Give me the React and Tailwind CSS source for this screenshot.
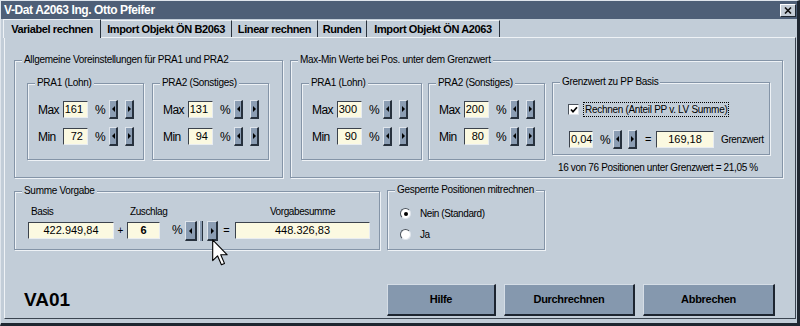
import React from 'react';

const BG = 'bg-[#c2cdd8]';

function Spin({ dir = 'right', className = '' }) {
    return (
        <div className={`w-[9px] h-[19px] bg-[#8b9db3] border-t border-l border-t-[#dfe5ec] border-l-[#dfe5ec] border-r-2 border-b-2 border-r-[#27313d] border-b-[#27313d] flex items-center justify-center ${className}`}>
            {dir === 'left'
                ? <div className="w-0 h-0 border-y-[3px] border-y-transparent border-r-[3px] border-r-black" />
                : <div className="w-0 h-0 border-y-[3px] border-y-transparent border-l-[3px] border-l-black" />}
        </div>
    );
}

function Field({ children, className = '' }) {
    return (
        <div className={`h-[17px] bg-[#fbf9e1] border border-t-[#3b424c] border-l-[#3b424c] border-r-[#e9edf1] border-b-[#e9edf1] text-[11px] tracking-normal leading-[15px] text-black whitespace-nowrap ${className}`}>
            {children}
        </div>
    );
}

function Group({ label, className = '', children }) {
    return (
        <div className={`relative border border-[#8494a7] shadow-[inset_1px_1px_0_#eef2f6,1px_1px_0_#eef2f6] ${className}`}>
            <span className={`absolute -top-[8px] left-[7px] px-[2px] ${BG} text-[10px] tracking-[-0.3px] leading-[14px] whitespace-nowrap`}>{label}</span>
            {children}
        </div>
    );
}

function PctRow({ label, value }) {
    return (
        <div className="flex items-center h-[19px]">
            <span className="w-[25px] text-[12px] tracking-[-0.6px]">{label}</span>
            <Field className="w-[25px] text-right pr-[4px]">{value}</Field>
            <span className="w-[21px] pl-[7px] text-[12px]">%</span>
            <Spin dir="left" />
            <Spin className="ml-[7px]" />
        </div>
    );
}

function PraBox({ label, max, min, className = '' }) {
    return (
        <Group label={label} className={`h-[77px] ${className}`}>
            <div className="pt-[16px] pl-[10px] flex flex-col gap-[8px]">
                <PctRow label="Max" value={max} />
                <PctRow label="Min" value={min} />
            </div>
        </Group>
    );
}

function Radio({ checked }) {
    return (
        <div className="w-[11px] h-[11px] rounded-full bg-white border border-t-[#4a525c] border-l-[#4a525c] border-r-[#dfe5ec] border-b-[#dfe5ec] flex items-center justify-center">
            {checked && <div className="w-[4px] h-[4px] rounded-full bg-black" />}
        </div>
    );
}

function WinButton({ children, className = '' }) {
    return (
        <button className={`h-[32px] bg-[#8598ae] border-t border-l border-t-[#d5dde6] border-l-[#d5dde6] border-r-2 border-b-2 border-r-[#1d2530] border-b-[#1d2530] text-[11px] tracking-[-0.3px] font-bold text-black ${className}`}>
            {children}
        </button>
    );
}

const tabs = [
    { label: 'Import Objekt ÖN B2063', w: 'w-[131px]' },
    { label: 'Linear rechnen', w: 'w-[86px]' },
    { label: 'Runden', w: 'w-[49px]' },
    { label: 'Import Objekt ÖN A2063', w: 'w-[133px]' },
];

export default function App() {
    return (
        <div className={`relative w-[800px] h-[326px] ${BG} border-l border-t border-l-[#dfe5ec] border-t-[#dfe5ec] border-r-[3px] border-b-[3px] border-r-[#1f2731] border-b-[#1f2731] flex flex-col overflow-hidden text-black whitespace-nowrap font-['Liberation_Sans',Arial,sans-serif]`}>
            {/* title bar */}
            <div className="h-[18px] bg-[#4e5f77] flex items-center justify-between pl-[3px] pr-[1px]">
                <span className="text-white font-bold text-[12px] tracking-[-0.4px] leading-[16px]">V-Dat A2063 Ing. Otto Pfeifer</span>
                <div className="w-[16px] h-[13px] bg-[#c5cdd6] border-t border-l border-t-white border-l-white border-r border-b border-r-[#1f2731] border-b-[#1f2731] flex items-center justify-center">
                    <svg width="8" height="7" viewBox="0 0 8 7">
                        <path d="M1 0.5 L7 6.5 M7 0.5 L1 6.5" stroke="#111" strokeWidth="1.6" />
                    </svg>
                </div>
            </div>

            {/* tabs */}
            <div className="h-[18px] flex items-end pl-[2px]">
                <div className={`w-[98px] h-[19px] ${BG} border-t border-l border-t-[#eef2f6] border-l-[#eef2f6] border-r border-r-[#2a333e] flex items-center justify-center text-[11px] tracking-[-0.4px] font-bold z-10 -mb-[1px]`}>
                    Variabel rechnen
                </div>
                {tabs.map(t => (
                    <div key={t.label} className={`${t.w} h-[17px] border-t border-t-[#eef2f6] border-r border-r-[#2a333e] flex items-center justify-center text-[11px] tracking-[-0.4px] font-bold`}>
                        {t.label}
                    </div>
                ))}
            </div>

            {/* tab panel */}
            <div className="flex-1 ml-[3px] mr-[1px] mb-[4px] border-t border-l border-t-[#eef2f6] border-l-[#eef2f6] border-r border-b border-r-[#3a4450] border-b-[#3a4450] pl-[9px] pt-[22px] flex flex-col">
                <div className="flex gap-[7px]">
                    <Group label="Allgemeine Voreinstellungen für PRA1 und PRA2" className="w-[269px] h-[118px]">
                        <div className="pt-[22px] pl-[12px] flex gap-[8px]">
                            <PraBox label="PRA1 (Lohn)" max="161" min="72" className="w-[117px]" />
                            <PraBox label="PRA2 (Sonstiges)" max="131" min="94" className="w-[117px]" />
                        </div>
                    </Group>

                    <Group label="Max-Min Werte bei Pos. unter dem Grenzwert" className="w-[493px] h-[118px]">
                        <div className="pt-[21px] pl-[10px] flex items-start">
                            <PraBox label="PRA1 (Lohn)" max="300" min="90" className="w-[121px] mt-[1px]" />
                            <PraBox label="PRA2 (Sonstiges)" max="200" min="80" className="w-[117px] mt-[1px] ml-[6px]" />
                            <div className="ml-[7px] flex flex-col">
                                <Group label="Grenzwert zu PP Basis" className="w-[218px] h-[73px]">
                                    <div className="pt-[19px] pl-[15px] flex items-center">
                                        <div className="w-[11px] h-[11px] bg-white border border-t-[#4a525c] border-l-[#4a525c] border-r-[#dfe5ec] border-b-[#dfe5ec] flex items-center justify-center">
                                            <svg width="8" height="8" viewBox="0 0 8 8">
                                                <path d="M1 3.5 L3 5.8 L7 1.2" fill="none" stroke="#000" strokeWidth="1.7" />
                                            </svg>
                                        </div>
                                        <span className="ml-[4px] border border-dotted border-black px-[1px] text-[10px] tracking-[-0.3px] leading-[13px]">
                                            Rechnen (Anteil PP v. LV Summe)
                                        </span>
                                    </div>
                                    <div className="mt-[13px] pl-[16px] flex items-center">
                                        <Field className="w-[24px] pl-[1px]">0,04</Field>
                                        <span className="w-[20px] pl-[7px] text-[12px]">%</span>
                                        <Spin dir="left" />
                                        <Spin className="ml-[6px]" />
                                        <span className="w-[19px] pl-[8px] text-[11px]">=</span>
                                        <Field className="w-[58px] text-center">169,18</Field>
                                        <span className="ml-[7px] text-[10px] tracking-[-0.4px]">Grenzwert</span>
                                    </div>
                                </Group>
                                <span className="mt-[7px] pl-[6px] text-[10px] tracking-[-0.35px] leading-[12px]">
                                    16 von 76 Positionen unter Grenzwert = 21,05 %
                                </span>
                            </div>
                        </div>
                    </Group>
                </div>

                <div className="flex gap-[7px] mt-[13px]">
                    <Group label="Summe Vorgabe" className="w-[366px] h-[59px]">
                        <div className="pt-[14px] pl-[13px] flex items-end">
                            <div className="w-[86px] flex flex-col gap-[4px]">
                                <span className="pl-[3px] text-[10px] tracking-[-0.4px] leading-[12px]">Basis</span>
                                <Field className="w-[86px] text-center">422.949,84</Field>
                            </div>
                            <span className="w-[13px] text-center text-[10px] leading-[17px]">+</span>
                            <div className="w-[33px] flex flex-col gap-[4px]">
                                <span className="pl-[3px] text-[10px] tracking-[-0.4px] leading-[12px]">Zuschlag</span>
                                <Field className="w-[33px] text-center font-bold">6</Field>
                            </div>
                            <span className="w-[25px] pl-[12px] text-[12px] leading-[17px]">%</span>
                            <div className="flex items-end -mb-[2px]">
                                <Spin dir="left" className="w-[12px] h-[20px]" />
                                <div className="ml-[2px] w-[4px] h-[20px] bg-[#8b9db3] border-l border-l-[#dfe5ec] border-r border-r-[#27313d]" />
                                <Spin className="ml-[4px] w-[11px] h-[20px]" />
                            </div>
                            <span className="w-[17px] text-center text-[11px] leading-[17px]">=</span>
                            <div className="w-[135px] flex flex-col gap-[4px]">
                                <span className="text-center text-[10px] tracking-[-0.4px] leading-[12px]">Vorgabesumme</span>
                                <Field className="w-[135px] text-center">448.326,83</Field>
                            </div>
                        </div>
                    </Group>

                    <Group label="Gesperrte Positionen mitrechnen" className="w-[158px] h-[60px] -mt-[1px]">
                        <div className="pt-[17px] pl-[12px] flex flex-col gap-[10px]">
                            <div className="flex items-center gap-[9px]">
                                <Radio checked />
                                <span className="text-[10px] tracking-[-0.4px] leading-[11px]">Nein (Standard)</span>
                            </div>
                            <div className="flex items-center gap-[9px]">
                                <Radio />
                                <span className="text-[10px] tracking-[-0.4px] leading-[11px]">Ja</span>
                            </div>
                        </div>
                    </Group>
                </div>

                <div className="mt-[34px] flex items-center">
                    <span className="ml-[10px] font-bold text-[19px] leading-[22px]">VA01</span>
                    <div className="ml-auto mr-[20px] flex gap-[8px]">
                        <WinButton className="w-[109px]">Hilfe</WinButton>
                        <WinButton className="w-[131px]">Durchrechnen</WinButton>
                        <WinButton className="w-[132px]">Abbrechen</WinButton>
                    </div>
                </div>
            </div>

            {/* mouse pointer */}
            <svg className="absolute left-[211px] top-[238px]" width="18" height="28" viewBox="0 0 13 20">
                <path d="M0.5 0.5 L0.5 15.5 L4 12 L6.8 18.5 L9 17.5 L6.3 11.3 L11 11.3 Z" fill="#fff" stroke="#000" strokeWidth="0.8" strokeLinejoin="round" />
            </svg>
        </div>
    );
}
